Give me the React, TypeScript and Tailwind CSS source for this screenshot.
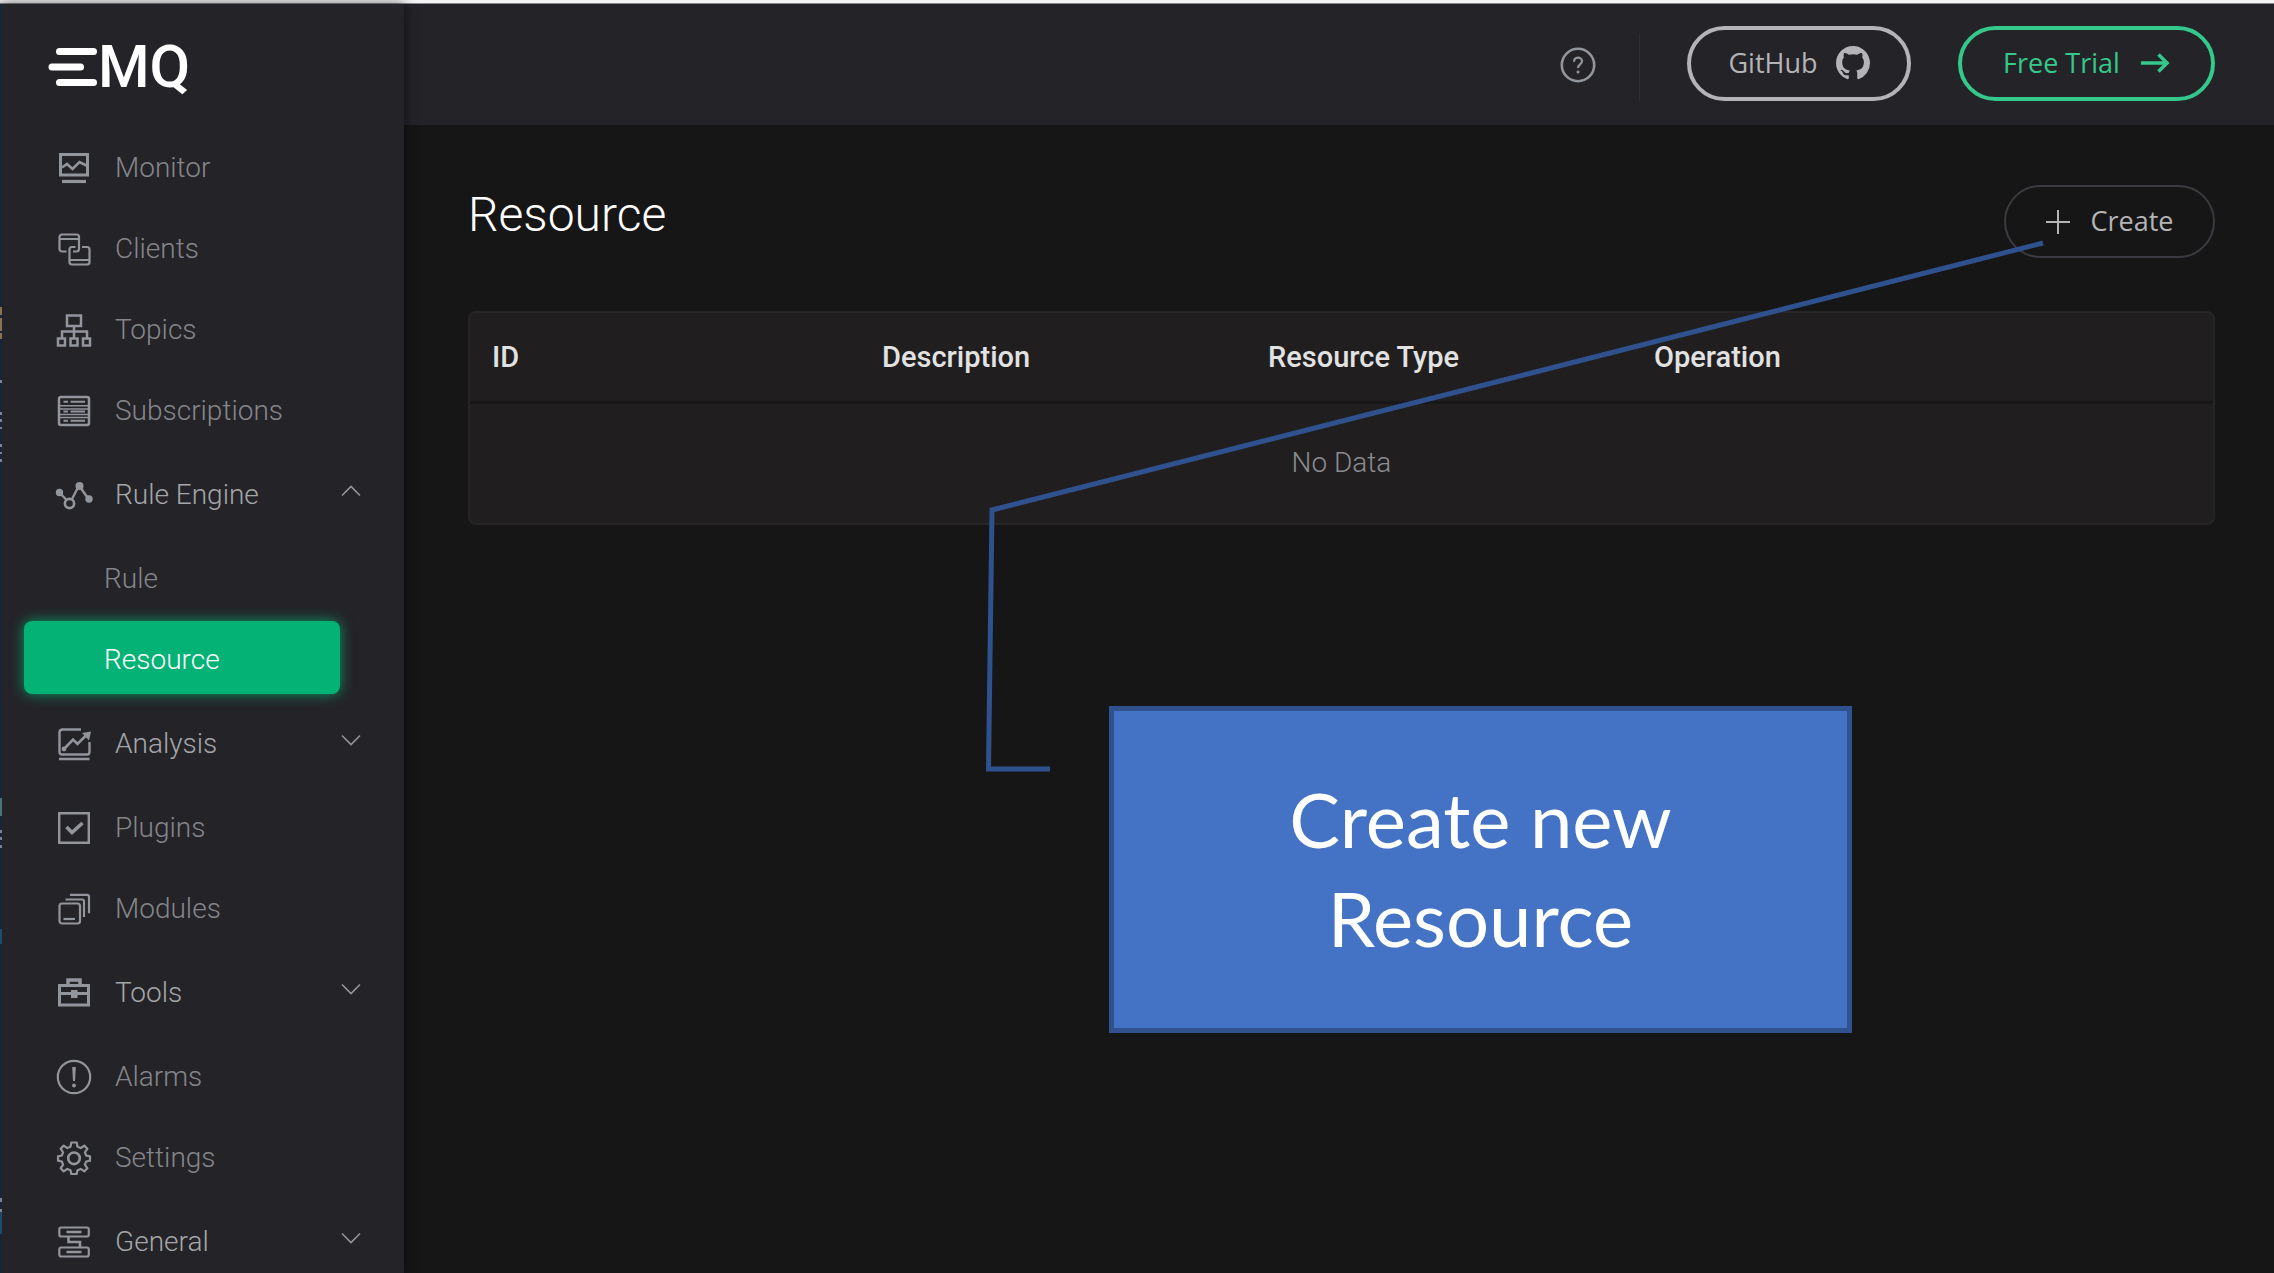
import type { ReactNode } from "react";

function Icon({ children }: { children: ReactNode }) {
  return (
    <svg
      viewBox="0 0 40 40"
      className="size-10 shrink-0 text-[#93959c]"
      fill="none"
      stroke="currentColor"
      strokeWidth="2.2"
      aria-hidden="true"
    >
      {children}
    </svg>
  );
}

const icons = {
  monitor: (
    <Icon>
      <path d="M6.5 6.5h27v20.5h-27z" strokeWidth="3" />
      <path d="M8 19.5l5-3.5 5.5 5 7-7 7 3.500" strokeWidth="2.6" />
      <path d="M8 33.500h24" strokeWidth="3.200" />
    </Icon>
  ),
  clients: (
    <Icon>
      <path d="M12.500 22.500H8a2.500 2.500 0 0 1-2.500-2.500V8A2.500 2.500 0 0 1 8 5.500h14.500A2.500 2.500 0 0 1 25 8v12a2.500 2.500 0 0 1-2.500 2.500H19M5.500 10H25" />
      <path d="M21.500 18H18a2.500 2.500 0 0 0-2.500 2.500V33a2.500 2.500 0 0 0 2.500 2.500h15a2.500 2.500 0 0 0 2.500-2.500V20.500A2.500 2.500 0 0 0 33 18h-5M15.500 31h20" />
    </Icon>
  ),
  topics: (
    <Icon>
      <path d="M13 5.500h14v10.500H13zM20 16v13M8 29v-7.500h25V29" strokeWidth="2.500" />
      <path d="M4 28.500h7v7H4zM16.500 28.500h7v7h-7zM29 28.500h7v7h-7z" strokeWidth="2.500" />
    </Icon>
  ),
  subscriptions: (
    <Icon>
      <rect x="5" y="6" width="30" height="28" rx="2" strokeWidth="2.500" />
      <path d="M6 14.800h28M6 18h28M6 23.500h28M6 26.500h28" strokeWidth="1.400" />
      <path d="M9.500 10.800h4.500M16.500 10.800h14.500M9.500 20.500h4.500M16.500 20.500h14.500M9.500 29.800h4.500M16.500 29.800h14.500" strokeWidth="2" />
    </Icon>
  ),
  ruleEngine: (
    <Icon>
      <path d="M5 17l8 8.500M17.500 25l7.500-14.500M25 10.500L34.500 24" strokeWidth="2.400" />
      <g fill="currentColor" stroke="none">
        <circle cx="5.500" cy="17.500" r="3.700" />
        <circle cx="25.500" cy="11" r="4" />
        <circle cx="35" cy="24" r="3.700" />
      </g>
      <circle cx="15.500" cy="28.500" r="4.600" strokeWidth="2.600" />
    </Icon>
  ),
  analysis: (
    <Icon>
      <path d="M27 5.500H8A3 3 0 0 0 5.500 8v20A2.500 2.500 0 0 0 8 30.500h25a2.500 2.500 0 0 0 2.500-2.500V18M5 35h30.500" strokeWidth="2.400" />
      <path d="M10 25l9-9.500 4.500 4.500 9-9" strokeWidth="2.600" />
      <path d="M28 9l9-1.500-2 9z" fill="currentColor" stroke="none" />
      <circle cx="10" cy="25" r="2.400" fill="currentColor" stroke="none" />
    </Icon>
  ),
  plugins: (
    <Icon>
      <path d="M5.200 5.200h29.600v29.600H5.200z" strokeWidth="2.400" />
      <path d="M12.500 19l5.500 5.500 10.500-9.500" strokeWidth="3.600" />
    </Icon>
  ),
  modules: (
    <Icon>
      <rect x="5.500" y="14.500" width="20.500" height="20" rx="2.500" />
      <path d="M9.500 30h11.500" />
      <path d="M11.500 10.500H28a2 2 0 0 1 2 2V28M16 5.800h17a2 2 0 0 1 2 2v16.500" />
    </Icon>
  ),
  tools: (
    <Icon>
      <path d="M5.500 12.500h29v19.500h-29zM5.500 20.500h29" strokeWidth="3" />
      <path d="M14 12V7h12v5" strokeWidth="3.500" />
      <path d="M17 17h6.500v8H17z" fill="currentColor" stroke="none" />
    </Icon>
  ),
  alarms: (
    <Icon>
      <circle cx="20" cy="20" r="16.200" />
      <path d="M18.200 10h3.600l-.8 14h-2z" fill="currentColor" stroke="none" />
      <circle cx="20" cy="28.500" r="1.900" fill="currentColor" stroke="none" />
    </Icon>
  ),
  settings: (
    <Icon>
      <path
        d="M17.300 4.500h5.400l.8 4.300 3.200 1.300 3.600-2.500 3.100 3.100-2.500 3.600 1.300 3.200 3.800.8v4.400l-3.800.8-1.300 3.200 2.500 3.600-3.100 3.100-3.600-2.500-3.200 1.300-.8 3.800h-5.400l-.8-3.800-3.200-1.300-3.600 2.500-3.100-3.100 2.500-3.600-1.300-3.200-3.800-.8v-4.400l3.800-.8 1.300-3.200-2.500-3.600 3.100-3.100 3.600 2.500 3.200-1.300z"
        strokeLinejoin="round"
        strokeWidth="2.200"
      />
      <circle cx="20" cy="20.300" r="5.800" strokeWidth="2.600" />
    </Icon>
  ),
  general: (
    <Icon>
      <rect x="5.300" y="5.500" width="29.500" height="9" rx="2" />
      <rect x="5.300" y="25.500" width="29.500" height="9" rx="2" />
      <path d="M12.500 10h15M12.500 30h15" strokeWidth="2.400" />
      <path d="M14.500 14.500v5.500H26v5.500" strokeWidth="2.600" />
    </Icon>
  ),
};

function Chevron({ up = false }: { up?: boolean }) {
  return (
    <svg viewBox="0 0 20 12" className="mb-2 ml-auto h-3 w-5" fill="none" stroke="#93959c" strokeWidth="1.600" aria-hidden="true">
      <path d={up ? "M1 10.500l9-9 9 9" : "M1 1.500l9 9 9-9"} />
    </svg>
  );
}

function NavItem({ icon, label }: { icon: ReactNode; label: string }) {
  return (
    <li>
      <a href="#" className="flex h-[81px] items-center gap-[21px] pl-[52px] text-[#85868b]">
        {icon}
        {label}
      </a>
    </li>
  );
}

function NavGroup({ icon, label, open = false, children }: { icon: ReactNode; label: string; open?: boolean; children?: ReactNode }) {
  return (
    <li>
      <button type="button" aria-expanded={open} className="flex h-[87px] w-full items-center gap-[21px] pr-[43px] pl-[52px] text-left text-[#a5a6a9]">
        {icon}
        {label}
        <Chevron up={open} />
      </button>
      {children}
    </li>
  );
}

function Sidebar() {
  return (
    <aside className="relative z-10 w-[404px] shrink-0 border-l-2 border-[#17243a] bg-[#242328] shadow-[0_0_12px_rgba(0,0,0,0.6)]">
      <a href="#" aria-label="EMQ" className="flex h-[123px] items-center pt-0.5 pl-[46px] text-white">
        <svg viewBox="0 0 50 40" className="h-10 w-[50px]" stroke="currentColor" strokeWidth="7" strokeLinecap="round" aria-hidden="true">
          <path d="M11.500 4.500h34M4 20h28.500M11.500 35.500h34" />
        </svg>
        <span className="text-[59px] leading-none font-medium">MQ</span>
      </a>
      <nav aria-label="Main" className="text-[28px] leading-9 font-light">
        <ul>
          <NavItem icon={icons.monitor} label="Monitor" />
          <NavItem icon={icons.clients} label="Clients" />
          <NavItem icon={icons.topics} label="Topics" />
          <NavItem icon={icons.subscriptions} label="Subscriptions" />
          <NavGroup icon={icons.ruleEngine} label="Rule Engine" open>
            <ul>
              <li>
                <a href="#" className="flex h-[81px] items-center pl-[102px] text-[#85868b]">
                  Rule
                </a>
              </li>
              <li className="flex h-[81px] items-start pt-0.5 pr-[64px] pl-[22px]">
                <a
                  href="#"
                  aria-current="page"
                  className="flex h-[73px] w-full items-center rounded-lg bg-[#03b274] pt-1 pl-20 text-white shadow-[0_0_14px_rgba(3,190,120,0.75)]"
                >
                  Resource
                </a>
              </li>
            </ul>
          </NavGroup>
          <NavGroup icon={icons.analysis} label="Analysis" />
          <NavItem icon={icons.plugins} label="Plugins" />
          <NavItem icon={icons.modules} label="Modules" />
          <NavGroup icon={icons.tools} label="Tools" />
          <NavItem icon={icons.alarms} label="Alarms" />
          <NavItem icon={icons.settings} label="Settings" />
          <NavGroup icon={icons.general} label="General" />
        </ul>
      </nav>
    </aside>
  );
}

function Header() {
  return (
    <header className="flex h-[121px] items-center justify-end bg-[#242328] pr-[59px] pb-[3px] font-['Open_Sans',sans-serif] text-[27px]">
      <button type="button" aria-label="Help" className="mt-1 mr-[43px]">
        <svg viewBox="0 0 36 36" className="size-9" fill="none" stroke="#93959c" strokeWidth="2.600" aria-hidden="true">
          <circle cx="18" cy="18" r="16.200" />
          <path d="M14 14.800c0-5.600 8-5.400 8-.6 0 3.200-4 3.200-4 6.800" strokeWidth="2.200" />
          <circle cx="18" cy="25" r="1.500" fill="#93959c" stroke="none" />
        </svg>
      </button>
      <div className="mt-2 mr-[47px] h-[68px] w-px bg-[#2f2e33]" />
      <a href="#" className="mr-[47px] flex h-[75px] w-[224px] items-center justify-center gap-[18px] rounded-full border-4 border-[#b4b4b7] text-[#b4b4b7]">
        GitHub
        <svg viewBox="0 0 16 16" className="size-[34px]" fill="currentColor" aria-hidden="true">
          <path d="M8 0C3.580 0 0 3.580 0 8c0 3.540 2.290 6.530 5.470 7.590.4.070.55-.17.55-.38 0-.19-.01-.82-.01-1.490-2.010.37-2.530-.49-2.690-.94-.09-.23-.48-.94-.82-1.130-.28-.15-.68-.52-.01-.53.63-.01 1.080.58 1.230.82.72 1.210 1.870.87 2.330.66.07-.52.28-.87.51-1.070-1.780-.2-3.640-.89-3.640-3.950 0-.87.31-1.590.82-2.150-.08-.2-.36-1.020.08-2.120 0 0 .67-.21 2.200.82.64-.18 1.320-.27 2-.27s1.360.09 2 .27c1.530-1.040 2.200-.82 2.200-.82.44 1.100.16 1.920.08 2.120.51.56.82 1.270.82 2.150 0 3.070-1.870 3.750-3.650 3.950.29.25.54.73.54 1.480 0 1.070-.01 1.930-.01 2.200 0 .21.15.46.55.38A8.010 8.010 0 0 0 16 8c0-4.420-3.580-8-8-8z" />
        </svg>
      </a>
      <a href="#" className="flex h-[75px] w-[257px] items-center justify-center gap-5 rounded-full border-4 border-[#34c88a] text-[#34c88a]">
        Free Trial
        <svg viewBox="0 0 30 20" className="h-5 w-[30px]" fill="none" stroke="currentColor" strokeWidth="3.600" aria-hidden="true">
          <path d="M1 10h26M18.500 1.500l8.500 8.500-8.500 8.500" />
        </svg>
      </a>
    </header>
  );
}

function ResourcePage() {
  return (
    <main className="pt-[60px] pr-[59px] pl-16">
      <div className="flex items-start justify-between">
        <h1 className="pt-px text-[48px] leading-[58px] font-light text-white">Resource</h1>
        <button
          type="button"
          className="flex h-[73px] w-[211px] items-center justify-center gap-[21px] rounded-full border-2 border-[#3b3a40] font-['Open_Sans',sans-serif] text-[27px] text-[#b4b4b7]"
        >
          <svg viewBox="0 0 24 24" className="size-6" stroke="currentColor" strokeWidth="2" aria-hidden="true">
            <path d="M12 0v24M0 12h24" />
          </svg>
          Create
        </button>
      </div>
      <div className="mt-[53px] overflow-hidden rounded-lg border-2 border-[#252526] bg-[#201e1f]">
        <table className="w-full table-fixed text-left text-[28px] leading-9">
          <thead>
            <tr className="h-[89px] border-b-3 border-[#171717] text-[29px] text-[#e2e2e3]">
              <th className="w-[388px] pl-[22px] font-medium">ID</th>
              <th className="w-[386px] pl-6 font-medium">Description</th>
              <th className="w-[386px] pl-6 font-medium">Resource Type</th>
              <th className="pl-6 font-medium">Operation</th>
            </tr>
          </thead>
          <tbody>
            <tr className="h-[121px]">
              <td colSpan={4} className="text-center font-light text-[#8b8c90]">
                No Data
              </td>
            </tr>
          </tbody>
        </table>
      </div>
    </main>
  );
}

function Callout() {
  return (
    <>
      <svg viewBox="0 0 1058 532" className="pointer-events-none absolute top-[240px] left-[986px] z-20 h-[532px] w-[1058px]" fill="none" stroke="#2f528f" strokeWidth="5" aria-hidden="true">
        <path d="M1057 3L6 270 2.500 529H64" />
      </svg>
      <div className="absolute top-[706px] left-[1109px] z-20 flex h-[327px] w-[743px] items-center justify-center border-5 border-[#2f528f] bg-[#4472c4]">
        <p className="w-[460px] pb-1 text-center font-['Lato',sans-serif] text-[76px] leading-[99px] text-white">Create new Resource</p>
      </div>
    </>
  );
}

function EdgeMarks() {
  return (
    <svg viewBox="0 0 2 1273" className="pointer-events-none absolute top-0 left-0 z-20 h-[1273px] w-0.5" aria-hidden="true">
      <path d="M0 307h2v8H0zM0 318h2v13H0zM0 333h2v6H0z" fill="#8a7355" />
      <path d="M0 380h2v3H0zM0 412h2v3H0zM0 419h2v3H0zM0 427h2v2H0zM0 444h2v3H0zM0 452h2v2H0zM0 459h2v3H0z" fill="#7b8390" />
      <path d="M0 798h2v18H0z" fill="#4d7272" />
      <path d="M0 830h2v3H0zM0 837h2v3H0zM0 845h2v3H0zM0 1198h2v4H0zM0 1209h2v3H0z" fill="#7b8390" />
      <path d="M0 929h2v15H0zM0 1212h2v22H0z" fill="#1f4a70" />
    </svg>
  );
}

export default function App() {
  return (
    <div className="relative flex h-screen flex-col overflow-hidden bg-[#161616] font-['Roboto',sans-serif]">
      <div className="h-1 shrink-0 border-b border-[#8a8a8c] bg-[#f4f4f6]" />
      <div className="flex min-h-0 flex-1">
        <Sidebar />
        <div className="min-w-0 flex-1">
          <Header />
          <ResourcePage />
        </div>
      </div>
      <EdgeMarks />
      <Callout />
    </div>
  );
}
